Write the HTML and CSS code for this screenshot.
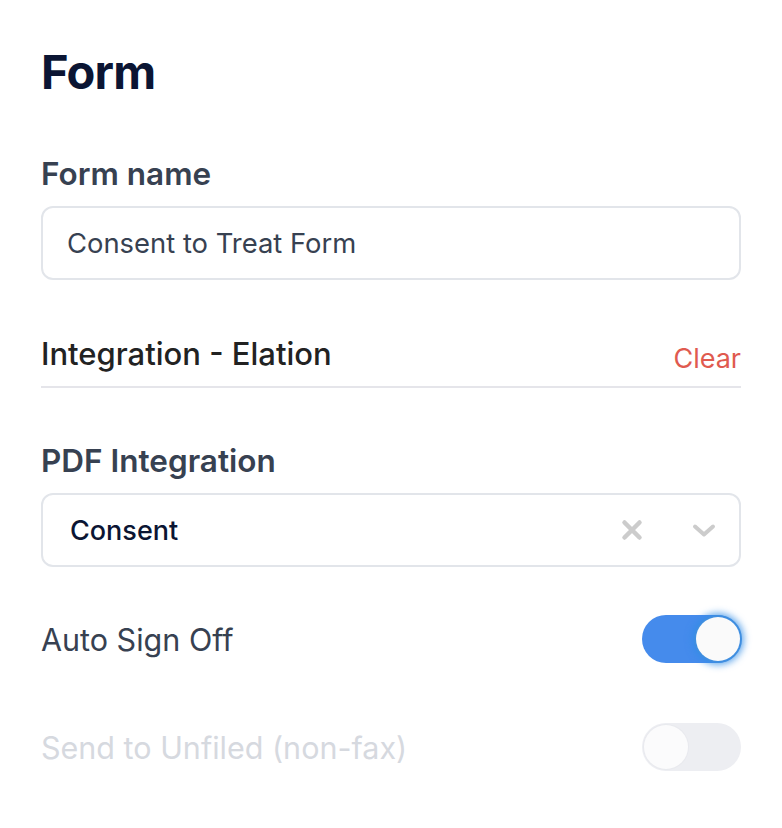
FILE: index.html
```html
<!DOCTYPE html>
<html lang="en">
<head>
    <meta charset="UTF-8">
    <meta name="viewport" content="width=device-width, initial-scale=1.0">
    <title>Form</title>
    <link rel="stylesheet" href="styles.css">
</head>
<body>
    <main class="panel">
        <h1 class="title">Form</h1>

        <div class="field">
            <label class="field-label" for="form-name">Form name</label>
            <input class="text-input" id="form-name" type="text" value="Consent to Treat Form">
        </div>

        <div class="integration-row">
            <span class="integration-name">Integration - Elation</span>
            <a class="clear-link" href="#">Clear</a>
        </div>

        <div class="field">
            <span class="field-label">PDF Integration</span>
            <div class="select">
                <span class="select-value">Consent</span>
                <span class="select-icons">
                    <svg class="icon-clear" width="22" height="22" viewBox="0 0 22 22">
                        <path d="M3.5 3.5 L18.5 18.5 M18.5 3.5 L3.5 18.5" stroke="#cccccc" stroke-width="4.5" stroke-linecap="round" fill="none"/>
                    </svg>
                    <svg class="icon-chevron" width="24" height="15" viewBox="0 0 24 15">
                        <path d="M3 3.5 L12 11.5 L21 3.5" stroke="#cccccc" stroke-width="4" stroke-linecap="round" stroke-linejoin="round" fill="none"/>
                    </svg>
                </span>
            </div>
        </div>

        <div class="toggle-row">
            <span class="toggle-label">Auto Sign Off</span>
            <span class="toggle on"><span class="knob"></span></span>
        </div>

        <div class="toggle-row disabled">
            <span class="toggle-label">Send to Unfiled (non-fax)</span>
            <span class="toggle off"><span class="knob"></span></span>
        </div>
    </main>
</body>
</html>
```

FILE: styles.css
```css
body {
    margin: 0;
    background-color: #ffffff;
    font-family: 'Inter', 'Liberation Sans', sans-serif;
}
.panel {
    padding: 40px 41px 40px 41px;
    width: 700px;
}
.title {
    margin: 0 0 50px 0;
    font-size: 47px;
    line-height: 64px;
    font-weight: 700;
    color: #0b1533;
    letter-spacing: -0.8px;
}
.field {
    display: flex;
    flex-direction: column;
}
.field-label {
    font-size: 31.5px;
    line-height: 40px;
    font-weight: 600;
    color: #374151;
    margin-bottom: 12px;
}
.text-input {
    box-sizing: border-box;
    height: 74px;
    padding: 0 24px;
    border: 2px solid #e2e5ea;
    border-radius: 12px;
    font-family: inherit;
    font-size: 27.4px;
    color: #374151;
    outline: none;
}
.integration-row {
    display: flex;
    justify-content: space-between;
    align-items: flex-end;
    margin-top: 55px;
    padding-bottom: 14px;
    border-bottom: 2px solid #e5e5ea;
    margin-bottom: 53px;
}
.integration-name {
    font-size: 31px;
    font-weight: 500;
    color: #222222;
}
.clear-link {
    font-size: 27px;
    color: #e05a4f;
    text-decoration: none;
    margin-bottom: -3px;
}
.select {
    box-sizing: border-box;
    height: 74px;
    display: flex;
    align-items: center;
    justify-content: space-between;
    padding: 0 23px 0 27px;
    border: 2px solid #e2e5ea;
    border-radius: 12px;
}
.select-value {
    font-size: 27px;
    font-weight: 500;
    color: #0b1533;
}
.select-icons {
    display: flex;
    align-items: center;
    gap: 49px;
}
.toggle-row {
    display: flex;
    justify-content: space-between;
    align-items: center;
    margin-top: 48px;
}
.toggle-row.disabled {
    margin-top: 60px;
}
.toggle-label {
    font-size: 30.5px;
    color: #374151;
}
.disabled .toggle-label {
    color: #d6d9df;
}
.toggle {
    position: relative;
    width: 99px;
    height: 48px;
    border-radius: 24px;
    display: flex;
    align-items: center;
    box-sizing: border-box;
}
.toggle.on {
    background-color: #458bec;
    justify-content: flex-end;
    padding: 0 1px;
}
.toggle.off {
    background-color: #edeef2;
    justify-content: flex-start;
    padding: 0 2px;
}
.knob {
    width: 44px;
    height: 44px;
    border-radius: 50%;
    background-color: #fafafa;
}
.toggle.on .knob {
    box-shadow: 0 0 0 2px #3f8ee0, 0 0 7px 4px rgba(50, 140, 230, 0.75);
}
.toggle.off .knob {
    background-color: #fbfbfc;
    box-shadow: 0 0 0 1px #e8e9ee;
}
```
